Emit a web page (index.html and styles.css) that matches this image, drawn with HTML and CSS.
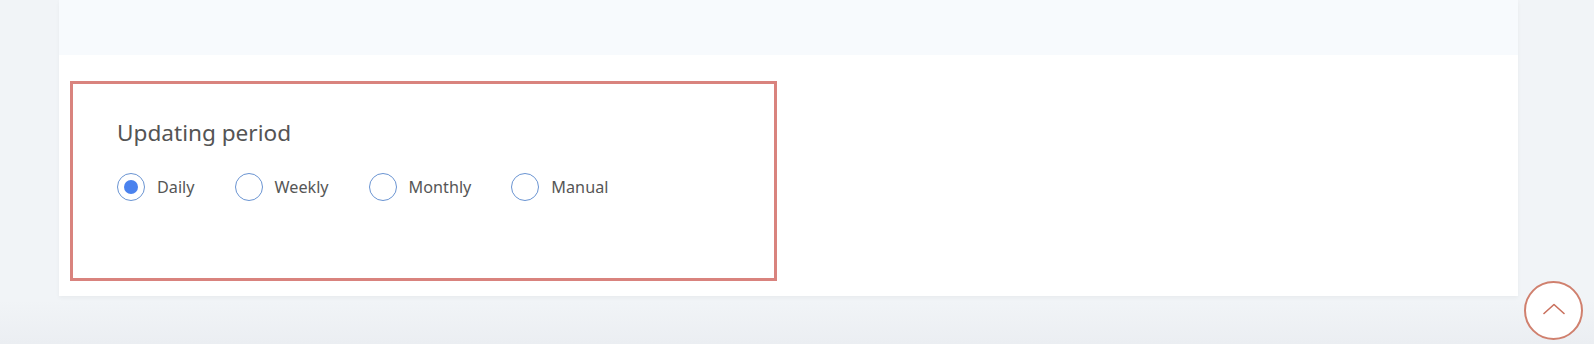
FILE: index.html
```html
<!DOCTYPE html>
<html lang="en">
<head>
<meta charset="utf-8">
<title>Updating period</title>
<link rel="stylesheet" href="styles.css">
</head>
<body>
<div class="page">
  <div class="card">
    <div class="card-top"></div>
    <section class="setting">
      <h2 class="setting-title">Updating period</h2>
      <div class="radio-group">
        <label class="radio"><input type="radio" name="period" checked><span>Daily</span></label>
        <label class="radio"><input type="radio" name="period"><span>Weekly</span></label>
        <label class="radio"><input type="radio" name="period"><span>Monthly</span></label>
        <label class="radio"><input type="radio" name="period"><span>Manual</span></label>
      </div>
    </section>
  </div>
</div>
<button class="to-top" aria-label="Back to top">
  <svg width="22" height="12" viewBox="0 0 22 12" fill="none"><path d="M1 10.5 L11 1.5 L21 10.5" stroke="#c9705d" stroke-width="1.6" stroke-linecap="round" stroke-linejoin="round"/></svg>
</button>
</body>
</html>
```

FILE: styles.css
```css
* { box-sizing: border-box; }
html, body {
  margin: 0;
  padding: 0;
}
body {
  width: 1594px;
  height: 344px;
  overflow: hidden;
  background: linear-gradient(#f1f4f7 0, #f1f4f7 300px, #ebeef2 344px);
  font-family: "Noto Sans", "Open Sans", sans-serif;
  color: #555;
}
.page {
  padding-left: 59px;
}
.card {
  width: 1459px;
  height: 296px;
  background: #fff;
  box-shadow: 0 2px 4px rgba(0, 0, 0, 0.04);
}
.card-top {
  height: 55px;
  background: #f7fafd;
}
.setting {
  margin: 26px 0 0 11px;
  width: 707px;
  height: 200px;
  border: 3px solid #d9837e;
  padding: 34px 0 0 44px;
}
.setting-title {
  margin: 0;
  font-size: 22.6px;
  font-weight: 400;
  line-height: 30px;
  color: #545454;
}
.radio-group {
  display: flex;
  gap: 40px;
  margin-top: 25px;
}
.radio {
  display: flex;
  align-items: center;
  gap: 12px;
  font-size: 16.2px;
  color: #565656;
  line-height: 28px;
}
.radio input {
  appearance: none;
  -webkit-appearance: none;
  margin: 0;
  width: 28px;
  height: 28px;
  border: 1.8px solid #6a94d2;
  border-radius: 50%;
  background: #fff;
  display: grid;
  place-items: center;
}
.radio input:checked::after {
  content: "";
  width: 14px;
  height: 14px;
  border-radius: 50%;
  background: #4a82ee;
}
.to-top {
  position: absolute;
  left: 1524px;
  top: 281px;
  width: 59px;
  height: 59px;
  border-radius: 50%;
  border: 2px solid #d0806e;
  background: #fff;
  padding: 0 0 4px 0;
  display: grid;
  place-items: center;
}
```
